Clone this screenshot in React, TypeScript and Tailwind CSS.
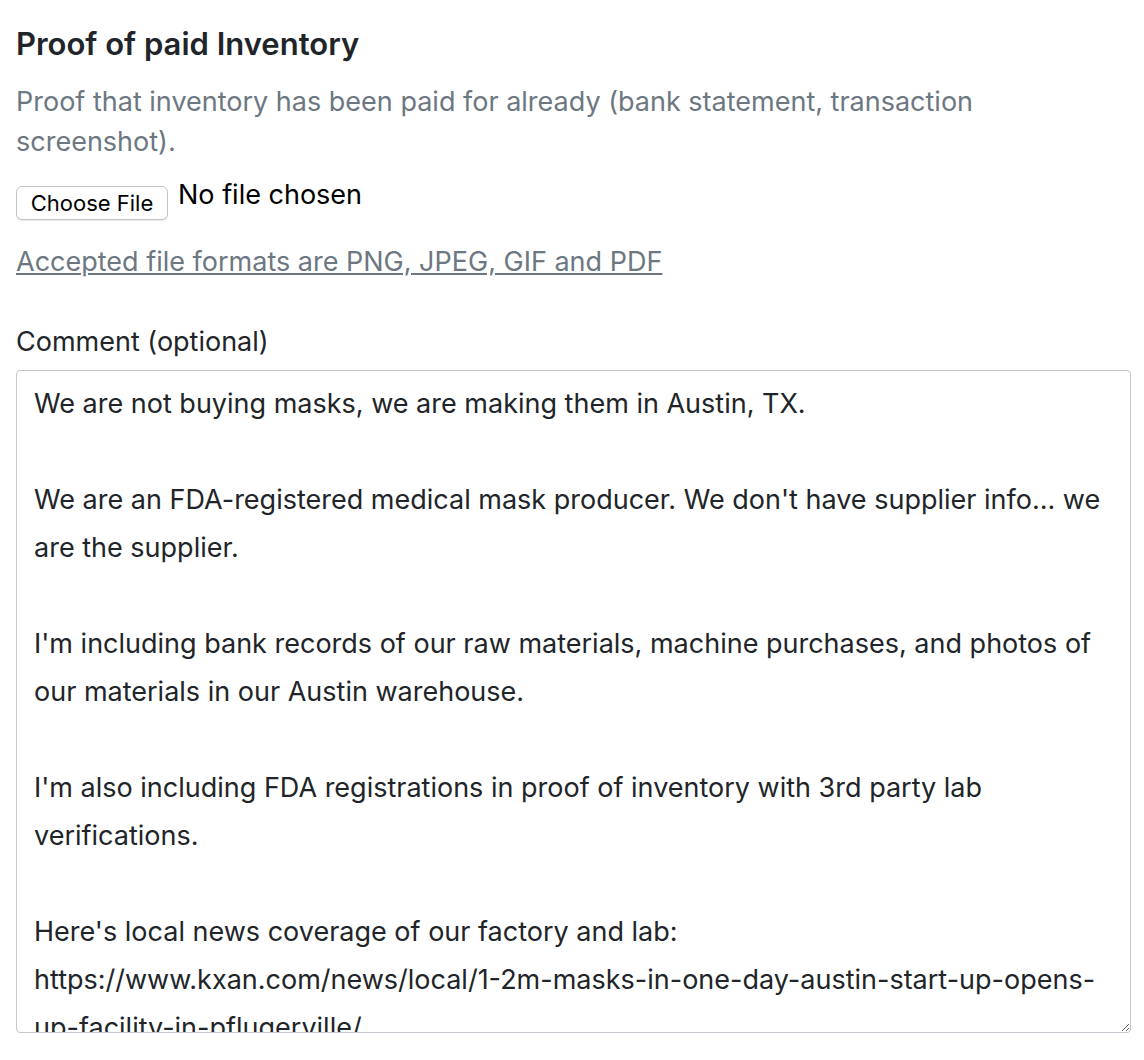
const comment = `We are not buying masks, we are making them in Austin, TX.

We are an FDA-registered medical mask producer. We don't have supplier info... we are the supplier.

I'm including bank records of our raw materials, machine purchases, and photos of our materials in our Austin warehouse.

I'm also including FDA registrations in proof of inventory with 3rd party lab verifications.

Here's local news coverage of our factory and lab: https://www.kxan.com/news/local/1-2m-masks-in-one-day-austin-start-up-opens-up-facility-in-pflugerville/`;

export default function App(): JSX.Element {
  return (
    <div
      className="min-h-[1060px] bg-white pl-4 pt-[26px] text-[#212529]"
      style={{ fontFamily: 'Inter, "Noto Sans", sans-serif' }}
    >
      <h2 className="text-[31px] font-semibold leading-[36px]">Proof of paid Inventory</h2>

      <p className="mt-5 w-[1110px] text-[27px] leading-[40px] text-[#6c7782]">
        Proof that inventory has been paid for already (bank statement, transaction screenshot).
      </p>

      {/* File picker */}
      <div className="mt-[18px] flex items-start gap-[10px]">
        <button
          type="button"
          className="mt-[6px] h-[34px] w-[152px] rounded-[6px] border border-[#c4c4c4] bg-white text-[22px] leading-none text-black shadow-[0_1px_1px_rgba(0,0,0,0.08)]"
        >
          Choose File
        </button>
        <span className="text-[27px] leading-[30px] text-black">No file chosen</span>
      </div>

      <a href="#" className="mt-[22px] block w-fit text-[27px] leading-[40px] text-[#6c7782] underline">
        Accepted file formats are PNG, JPEG, GIF and PDF
      </a>

      {/* Comment */}
      <label className="mt-10 block text-[27px] leading-[40px]">Comment (optional)</label>
      <textarea
        readOnly
        value={comment}
        className="mt-2 block h-[663px] w-[1115px] resize overflow-hidden rounded-[4px] border border-[#c3c8ce] px-[17px] pt-[9px] text-[27px] leading-[48px] text-[#212529] outline-none"
        style={{ fontFamily: 'Inter, "Noto Sans", sans-serif' }}
      />
    </div>
  );
}
